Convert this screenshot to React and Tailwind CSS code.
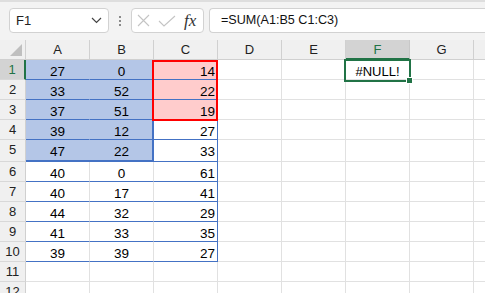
import React from "react";

const data = [
  [27, 0, 14],
  [33, 52, 22],
  [37, 51, 19],
  [39, 12, 27],
  [47, 22, 33],
  [40, 0, 61],
  [40, 17, 41],
  [44, 32, 29],
  [41, 33, 35],
  [39, 39, 27],
  [null, null, null],
  [null, null, null],
];
const cols = ["A", "B", "C", "D", "E", "F", "G"];

function cellClass(r, c) {
  const parts = ["border-r", "border-b", "pt-[3px]", "leading-[17px]"];
  const inTable = c <= 2 && r <= 10;
  const sel = c <= 1 && r <= 5;
  const red = c === 2 && r <= 3;
  if (sel) parts.push("bg-[#b4c6e7]");
  else if (red) parts.push("bg-[#ffcccc]");
  else parts.push("bg-white");
  if (inTable) parts.push("[border-bottom-color:#4472c4]");
  else parts.push("[border-bottom-color:#e1e1e1]");
  if (c === 2 && r <= 10) parts.push("[border-right-color:#4472c4]");
  else if (c === 0 && sel) parts.push("[border-right-color:#b4c6e7]");
  else parts.push("[border-right-color:#e1e1e1]");
  if (c === 2) parts.push("text-right", "pr-[2px]");
  else parts.push("text-center");
  return parts.join(" ");
}

export default function App() {
  const heights = { 5: "h-[22px]" };
  return (
    <div className="w-[485px] h-[293px] overflow-hidden bg-white font-['Liberation_Sans',Arial,sans-serif] text-[#000]">
      {/* formula bar */}
      <div className="h-[40px] bg-[#f3f3f3] border-t-2 border-[#dedede] flex items-start pt-[6px] pl-[9px]">
        <div className="w-[100px] h-[25px] bg-white border border-[#d2d2d2] rounded-[4px] flex items-center justify-between pl-[6px] pr-[6px] text-[13px] text-[#222]">
          <span>F1</span>
          <svg width="11" height="7" viewBox="0 0 11 7">
            <path d="M1 1 L5.5 5.5 L10 1" fill="none" stroke="#444" strokeWidth="1.2" />
          </svg>
        </div>
        <div className="w-[22px] h-[25px] flex flex-col items-center justify-center gap-[2px]">
          <div className="w-[2px] h-[2px] bg-[#8a8a8a]" />
          <div className="w-[2px] h-[2px] bg-[#8a8a8a]" />
          <div className="w-[2px] h-[2px] bg-[#8a8a8a]" />
        </div>
        <div className="w-[73px] h-[25px] bg-white border border-[#d2d2d2] rounded-[4px] flex items-center pl-[5px]">
          <svg width="13" height="13" viewBox="0 0 13 13">
            <path d="M1 1 L12 12 M12 1 L1 12" stroke="#c4c4c4" strokeWidth="1.1" fill="none" />
          </svg>
          <svg width="18" height="12" viewBox="0 0 18 12" className="ml-[8px]">
            <path d="M1 6 L6 11 L17 1" stroke="#c4c4c4" strokeWidth="1.1" fill="none" />
          </svg>
          <span className="ml-[8px] font-['Liberation_Serif',serif] italic text-[17px] leading-[20px] text-[#333]">fx</span>
        </div>
        <div className="ml-[5px] flex-1 h-[25px] bg-white border border-r-0 border-[#d2d2d2] rounded-l-[4px] flex items-center pl-[11px] text-[12.6px] text-[#111]">
          =SUM(A1:B5 C1:C3)
        </div>
      </div>

      {/* grid */}
      <div className="relative grid grid-cols-[26px_repeat(7,64px)_1fr] text-[13.5px]">
        {/* header row */}
        <div className="h-[20px] bg-[#f0f0f0] border-r border-b border-[#d0d0d0] flex items-end justify-end pr-[3px] pb-[3px]">
          <svg width="12" height="12" viewBox="0 0 12 12">
            <path d="M12 0 L12 12 L0 12 Z" fill="#bfbfbf" />
          </svg>
        </div>
        {cols.map((c, i) => (
          <div
            key={c}
            className={
              i === 5
                ? "h-[20px] bg-[#d3d3d3] border-r border-b-2 [border-right-color:#c8c8c8] [border-bottom-color:#217346] text-center text-[13px] leading-[19px] text-[#217346]"
                : "h-[20px] bg-[#f0f0f0] border-r border-b border-[#d0d0d0] text-center text-[13px] leading-[19px] text-[#222]"
            }
          >
            {c}
          </div>
        ))}
        <div className="h-[20px] bg-[#f0f0f0] border-b border-[#d0d0d0]" />

        {data.map((row, ri) => {
          const r = ri + 1;
          const h = heights[r] || "h-[20px]";
          return (
            <React.Fragment key={r}>
              <div
                className={
                  r === 1
                    ? `${h} bg-[#d3d3d3] border-r-2 border-b [border-right-color:#217346] [border-bottom-color:#d8d8d8] text-center text-[13px] leading-[19px] text-[#217346]`
                    : `${h} bg-[#f0f0f0] border-r border-b [border-right-color:#d0d0d0] [border-bottom-color:#d8d8d8] text-center text-[13px] leading-[19px] text-[#222]`
                }
              >
                {r}
              </div>
              {cols.map((c, ci) => {
                let content = null;
                if (ci <= 2 && row[ci] !== null) content = row[ci];
                if (r === 1 && ci === 5) content = "#NULL!";
                return (
                  <div key={c} className={`${h} ${cellClass(r, ci)} ${r === 1 && ci === 5 ? "text-[13px]" : ""}`}>
                    {content}
                  </div>
                );
              })}
              <div className={`${h} bg-white border-b border-[#e1e1e1]`} />
            </React.Fragment>
          );
        })}

        {/* selection A1:B5 */}
        <div className="absolute left-[26px] top-[20px] w-[128px] h-[102px] border-r-2 border-b-2 border-[#4472c4] pointer-events-none" />
        {/* red box C1:C3 */}
        <div className="absolute left-[152px] top-[20px] w-[66px] h-[61px] border-2 border-[#ff0000] pointer-events-none" />
        {/* active cell F1 */}
        <div className="absolute left-[344px] top-[19px] w-[67px] h-[23px] border-2 border-[#217346] pointer-events-none" />
        <div className="absolute left-[406px] top-[37px] w-[7px] h-[7px] bg-[#217346] border border-white pointer-events-none" />
      </div>
    </div>
  );
}
